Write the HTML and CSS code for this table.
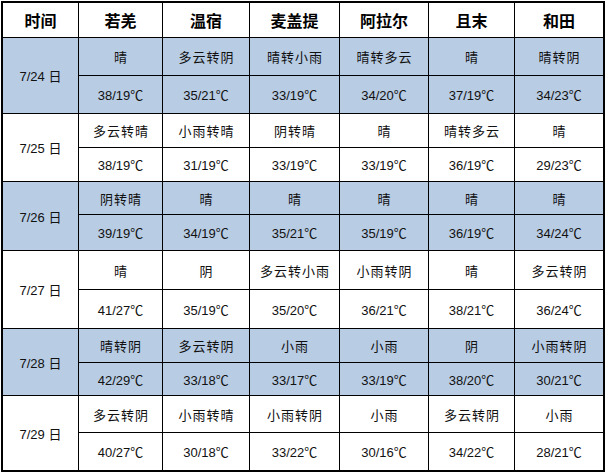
FILE: index.html
```html
<!DOCTYPE html>
<html lang="zh">
<head>
<meta charset="utf-8">
<link rel="stylesheet" href="styles.css">
</head>
<body>
<div class="grid">
  <div class="c h">时间</div><div class="c h">若羌</div><div class="c h">温宿</div><div class="c h">麦盖提</div><div class="c h">阿拉尔</div><div class="c h">且末</div><div class="c h">和田</div>

  <div class="c d b">7/24 日</div>
  <div class="c w b">晴</div><div class="c w b">多云转阴</div><div class="c w b">晴转小雨</div><div class="c w b">晴转多云</div><div class="c w b">晴</div><div class="c w b">晴转阴</div>
  <div class="c b">38/19℃</div><div class="c b">35/21℃</div><div class="c b">33/19℃</div><div class="c b">34/20℃</div><div class="c b">37/19℃</div><div class="c b">34/23℃</div>

  <div class="c d">7/25 日</div>
  <div class="c w">多云转晴</div><div class="c w">小雨转晴</div><div class="c w">阴转晴</div><div class="c w">晴</div><div class="c w">晴转多云</div><div class="c w">晴</div>
  <div class="c">38/19℃</div><div class="c">31/19℃</div><div class="c">33/19℃</div><div class="c">33/19℃</div><div class="c">36/19℃</div><div class="c">29/23℃</div>

  <div class="c d b">7/26 日</div>
  <div class="c w b">阴转晴</div><div class="c w b">晴</div><div class="c w b">晴</div><div class="c w b">晴</div><div class="c w b">晴</div><div class="c w b">晴</div>
  <div class="c b">39/19℃</div><div class="c b">34/19℃</div><div class="c b">35/21℃</div><div class="c b">35/19℃</div><div class="c b">36/19℃</div><div class="c b">34/24℃</div>

  <div class="c d">7/27 日</div>
  <div class="c w">晴</div><div class="c w">阴</div><div class="c w">多云转小雨</div><div class="c w">小雨转阴</div><div class="c w">晴</div><div class="c w">多云转阴</div>
  <div class="c">41/27℃</div><div class="c">35/19℃</div><div class="c">35/20℃</div><div class="c">36/21℃</div><div class="c">38/21℃</div><div class="c">36/24℃</div>

  <div class="c d b">7/28 日</div>
  <div class="c w b">晴转阴</div><div class="c w b">多云转阴</div><div class="c w b">小雨</div><div class="c w b">小雨</div><div class="c w b">阴</div><div class="c w b">小雨转阴</div>
  <div class="c b">42/29℃</div><div class="c b">33/18℃</div><div class="c b">33/17℃</div><div class="c b">33/19℃</div><div class="c b">38/20℃</div><div class="c b">30/21℃</div>

  <div class="c d">7/29 日</div>
  <div class="c w">多云转阴</div><div class="c w">小雨转晴</div><div class="c w">小雨转阴</div><div class="c w">小雨</div><div class="c w">多云转阴</div><div class="c w">小雨</div>
  <div class="c">40/27℃</div><div class="c">30/18℃</div><div class="c">33/22℃</div><div class="c">30/16℃</div><div class="c">34/22℃</div><div class="c">28/21℃</div>
</div>
</body>
</html>
```

FILE: styles.css
```css
html, body {
  margin: 0;
  padding: 0;
  background: #ffffff;
}

body {
  padding: 1px 0 0 1px;
  font-family: "Liberation Sans", "Noto Sans CJK SC", sans-serif;
  font-size: 13px;
  color: #111111;
}

.grid {
  display: grid;
  width: 604px;
  height: 471px;
  box-sizing: border-box;
  background: #000000;
  padding: 2px;
  gap: 1px;
  grid-template-columns: 75px 83px 86px 89px 88px 85px 88px;
  grid-template-rows: 34px 37px 37px 33px 33px 32px 35px 38px 38px 33px 32px 36px 37px;
}

.c {
  background: #ffffff;
  display: flex;
  align-items: center;
  justify-content: center;
  white-space: nowrap;
}

.w {
  letter-spacing: 1px;
  padding-left: 1px;
}

.b {
  background: #b8cce4;
}

.h {
  font-family: "Noto Sans CJK SC", sans-serif;
  font-weight: 700;
  font-size: 16px;
  color: #000000;
}

.d {
  grid-row: span 2;
}
```
